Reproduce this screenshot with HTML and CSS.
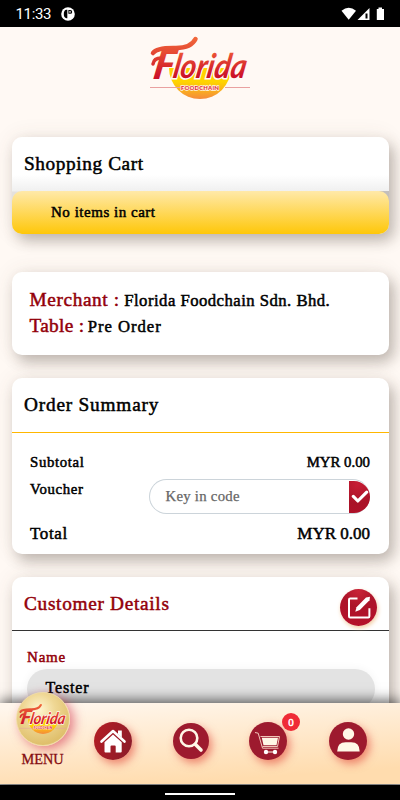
FILE: index.html
```
<!DOCTYPE html>
<html lang="en">
<head>
<meta charset="utf-8">
<title>Shopping Cart</title>
<link rel="stylesheet" href="styles.css">
</head>
<body>
<div class="screen">
  <header class="status">
    <span class="clock">11:33</span>
    <svg class="app" width="14" height="14" viewBox="0 0 14 14"><circle cx="7" cy="7" r="6.8" fill="#fff"/><path d="M5.500 2.800Q2.800 3 2.800 7t2.700 4.200H6.300V2.800z" fill="#000"/><path d="M7.400 3h1.900a1.900 1.900 0 0 1 0 3.800H7.400z" fill="#000"/><circle cx="9" cy="4.900" r=".8" fill="#fff"/></svg>
    <svg class="signals" width="46" height="14" viewBox="0 0 46 14"><path d="M0.500 3.800Q7.700-2.300 15 3.800L7.700 12.700z" fill="#fff"/><path d="M16.500 13L28.500 1v12z" fill="#fff"/><path d="M24.500 6.500h2v5h-2z" fill="#000"/><path d="M35.800 2h1.700V.6h3.500V2h2v11h-7.200z" fill="#fff"/></svg>
  </header>

  <main class="content">
    <svg class="brand" width="104" height="66" viewBox="0 0 104 66">
      <defs>
        <linearGradient id="red" x1="0" y1="0" x2="0" y2="1"><stop offset=".15" stop-color="#ee5a36"/><stop offset=".8" stop-color="#cb1028"/></linearGradient>
        <linearGradient id="swash" gradientUnits="userSpaceOnUse" x1="0" y1="2" x2="0" y2="44"><stop offset="0" stop-color="#f2693a"/><stop offset="1" stop-color="#cb1028"/></linearGradient>
        <linearGradient id="sun" x1="0" y1="0" x2="0" y2="1"><stop offset=".45" stop-color="#ffd400"/><stop offset="1" stop-color="#f58a3c"/></linearGradient>
        <g id="logo">
          <path d="M21 33H83A31 31 0 0 1 21 33" fill="url(#sun)"/>
          <path d="M2 52.500h31M77 52.500h25" stroke="#e9a1a0" stroke-width="1"/>
          <text class="logo-initial" x="4" y="44" transform="translate(7.800 0) skewX(-10)" textLength="21" lengthAdjust="spacingAndGlyphs">F</text>
          <text class="logo-name" x="24" y="43" transform="translate(7.500 0) skewX(-10)" textLength="73" lengthAdjust="spacingAndGlyphs">lorida</text>
          <path d="M5 18Q9 12.500 28 13Q43 13 47.500 4" fill="none" stroke="url(#swash)" stroke-width="4.500" stroke-linecap="round"/>
          <path d="M5 29Q6 23 13 23" fill="none" stroke="url(#swash)" stroke-width="3.500" stroke-linecap="round"/>
          <text class="logo-sub" x="33" y="54.600" textLength="38">FOODCHAIN</text>
        </g>
      </defs>
      <use href="#logo"/>
    </svg>

    <section class="card cart">
      <h2 class="title">Shopping Cart</h2>
      <div class="empty"><span>No items in cart</span></div>
    </section>

    <section class="card merchant">
      <p><b class="m1">Merchant :</b><span class="m2">Florida Foodchain Sdn. Bhd.</span></p>
      <p><b class="m3">Table :</b><span class="m4">Pre Order</span></p>
    </section>

    <section class="card summary">
      <h2 class="title">Order Summary</h2>
      <div class="row subtotal"><span class="wide">Subtotal</span><span>MYR 0.00</span></div>
      <div class="row voucher"><span class="wide">Voucher</span>
        <div class="code"><span>Key in code</span>
          <div class="apply"><svg width="18" height="14" viewBox="0 0 16 13"><path d="M1.800 6L6 10.200L14.200 2" fill="none" stroke="#fff" stroke-width="2.900" stroke-linecap="round" stroke-linejoin="round"/></svg></div>
        </div>
      </div>
      <div class="row total"><span class="wide">Total</span><span>MYR 0.00</span></div>
    </section>

    <section class="card customer">
      <div class="customer-head"><h2>Customer Details</h2>
        <div class="edit"><svg width="37" height="37" viewBox="0 0 37 37"><path d="M17.500 9.500h-7.300q-1.200 0-1.200 1.200v16.600q0 1.200 1.200 1.200h18q1.200 0 1.200-1.200v-8" fill="none" stroke="#fff" stroke-width="2"/><path d="M15.300 22.800l1.200-4.500L26 8.500l4-.7-.5 3.500-9.700 9.800z" fill="#fff"/></svg></div>
      </div>
      <div class="label">Name</div>
      <div class="field"><span>Tester</span></div>
    </section>
  </main>

  <nav class="nav">
    <div class="item menu">
      <div class="orb"><svg width="50" height="32" viewBox="0 0 104 66"><use href="#logo"/></svg></div>
      <span>MENU</span>
    </div>
    <div class="item"><div class="disc home"><svg width="38" height="38" viewBox="0 0 38 38"><path d="M7.500 19.500L19 9l11.500 10.500" fill="none" stroke="#fff" stroke-width="2.600" stroke-linecap="round" stroke-linejoin="round"/><path d="M24 8.500h3.800v7L24 12z" fill="#fff"/><path d="M10.500 20.300L19 12.600l8.700 7.700v9.200q0 1-1 1h-5v-6q0-1-1-1h-3.200q-1 0-1 1v6h-5q-1 0-1-1z" fill="#fff"/></svg></div></div>
    <div class="item"><div class="disc search"><svg width="36" height="36" viewBox="0 0 36 36"><circle cx="16" cy="15" r="8.300" fill="none" stroke="#fff8e7" stroke-width="2.600"/><path d="M22.500 21.500L28 27" stroke="#fff8e7" stroke-width="3.600" stroke-linecap="round"/></svg></div></div>
    <div class="item"><div class="disc cart-disc"><svg width="38" height="38" viewBox="0 0 38 38"><path d="M6 10.500l3.200.7 4.300 15h16M11.500 14.500H30.500L28.500 24.500H13.500" fill="none" stroke="#fbd9c8" stroke-width=".9" stroke-linejoin="round"/><path d="M12.800 15.800h16.200l-1.500 7.400H14.500z" fill="#fff8e7"/><path d="M17 30h9" stroke="#fff8e7"/><circle cx="17" cy="30" r="2.200" fill="#fff"/><circle cx="26" cy="30" r="2.200" fill="#fff"/></svg></div><span class="badge">0</span></div>
    <div class="item"><div class="disc"><svg width="38" height="38" viewBox="0 0 38 38"><circle cx="19.500" cy="12" r="5.700" fill="#fff8e7"/><path d="M8.200 29.500q0-9.300 8.500-9.300h5.500q8.500 0 8.500 9.300z" fill="#fff8e7"/></svg></div></div>
  </nav>
  <footer class="gesture"><i></i></footer>
</div>
</body>
</html>
```
FILE: styles.css
```
* { box-sizing: border-box; margin: 0; padding: 0; }
body {
  width: 400px; height: 800px; overflow: hidden;
  font-family: "Liberation Serif", serif; color: #000;
  -webkit-text-stroke: .5px currentColor;
}
h2, b { font-weight: 400; }
svg { display: block; }
.screen { height: 800px; display: flex; flex-direction: column; background: #fff9f4; }
.status { height: 27px; flex: none; background: #000; color: #fff; display: flex; align-items: center; padding: 1px 14px 0 15.500px; font: 15px Roboto, sans-serif; -webkit-text-stroke: 0; }
.clock { width: 34px; letter-spacing: -.35px; }
.app { margin-left: 11px; }
.signals { margin-left: auto; margin-right: -1px; }

.content { height: 676px; flex: none; overflow: hidden; padding: 8px 11px 0 12px; display: flex; flex-direction: column; }
.brand { margin: 0 auto 36px 136px; flex: none; }
.logo-initial, .logo-name { font-family: Lato, sans-serif; font-weight: 900; font-style: italic; fill: url(#red); stroke: none; -webkit-text-stroke: 0; }
.logo-initial { font-size: 41px; }
.logo-name { font-size: 34px; font-weight: 700; paint-order: stroke; stroke: #fff9f4; stroke-width: 3px; }
.logo-sub { font: 900 6px Lato, sans-serif; fill: #e0243a; stroke: #fff3e0; stroke-width: 1.500px; paint-order: stroke; -webkit-text-stroke: 0; }

.card { background: #fff; border-radius: 10px; flex: none; box-shadow: 5px 7px 14px rgba(70, 60, 50, .32), 0 0 22px rgba(90, 70, 50, .09); }
.title { height: 54px; line-height: 54px; padding-left: 12px; font-size: 19.300px; letter-spacing: .8px; }
.cart { height: 97px; margin-bottom: 38px; background: linear-gradient(to right, rgba(190, 186, 184, 0) 60%, rgba(190, 186, 184, .9)) 0 54px / 100% 20px no-repeat, linear-gradient(#fff 38px, #f0f0f0 54px, #e4e1de 55px); }
.cart .title { letter-spacing: .6px; }
.empty { height: 43px; border-radius: 10px; background: linear-gradient(#ffe9a9, #fec709); line-height: 43px; padding-left: 39px; font-size: 15px; letter-spacing: .52px; }
.merchant { height: 83px; margin-bottom: 23px; padding: 15px 17.500px; line-height: 26px; font-size: 16.700px; }
.merchant p { height: 26px; }
.merchant b { color: #93000a; font-size: 19.300px; }
.m1 { letter-spacing: .62px; margin-right: 4.500px; }
.m2 { letter-spacing: .47px; }
.m3 { letter-spacing: .3px; margin-right: 3.500px; }
.m4 { letter-spacing: .95px; }
.summary { height: 176px; margin-bottom: 23px; }
.summary .title { height: 55px; border-bottom: 1px solid #ffb700; }
.row { display: flex; justify-content: space-between; padding: 0 19px 0 18px; }
.wide { letter-spacing: .65px; }
.subtotal { height: 46px; padding-top: 18px; line-height: 22px; font-size: 14.800px; }
.voucher { height: 42px; font-size: 14.800px; line-height: 21px; }
.total { line-height: 25px; font-size: 17px; }
.code { width: 221px; height: 35px; border: 1px solid #ccd4da; border-right: 0; border-radius: 18px; display: flex; justify-content: space-between; align-items: center; padding-left: 15.500px; color: #666; font-size: 14.800px; line-height: 32px; -webkit-text-stroke-width: .25px; }
.code > span { letter-spacing: .25px; padding-bottom: 2px; }
.apply { width: 21px; height: 32px; border-radius: 0 16px 16px 0; background: radial-gradient(circle at 40% 10%, #c71d35, #a91227 60%, #b01028); display: flex; align-items: center; justify-content: center; }

.customer { height: 160px; }
.customer-head { height: 54px; border-bottom: 1px solid #333; display: flex; justify-content: space-between; padding: 0 12px 0 12px; color: #93000a; }
.customer-head h2 { font-size: 19.300px; line-height: 54px; letter-spacing: .7px; }
.edit { width: 37px; height: 37px; margin-top: 12px; border-radius: 50%; background: radial-gradient(circle at 50% 5%, #c92337, #ac1429 40%, #b8102a); box-shadow: 1px 2px 4px #f2cba0; }
.label { color: #93000a; font-size: 15px; line-height: 22px; padding: 15px 0 1px 15px; letter-spacing: .8px; }
.field { margin-left: 14.500px; width: 348px; height: 40px; border-radius: 20px; background: #e3e3e3; line-height: 37px; padding-left: 19px; font-size: 16px; letter-spacing: .85px; box-shadow: 0 0 10px rgba(0, 0, 0, .05); }

.nav { height: 81px; flex: none; display: grid; grid-template-columns: 74px 78px 77px 78px 82px; background: linear-gradient(176deg, #fff6ec 5%, #ffdcae 85%); box-shadow: 0 -3px 12px rgba(0, 0, 0, .6); position: relative; }
.item { display: flex; justify-content: center; align-items: center; position: relative; height: 75px; }
.menu { flex-direction: column; justify-content: flex-start; width: 85px; color: #860e12; font-size: 14.300px; -webkit-text-stroke-width: .3px; }
.menu span { line-height: 18px; margin-top: 4px; }
.orb { width: 54px; height: 54px; flex: none; margin-top: -11px; border-radius: 50%; border: 1px solid #f1dba5; background: radial-gradient(circle at 42% 32%, #fff6d2 0, #efd794 35%, #dfbf6b 75%, #f0dda0); box-shadow: 4px 3px 11px rgba(205, 35, 65, .55); display: flex; align-items: center; justify-content: center; }
.disc { width: 38px; height: 38px; border-radius: 50%; background: #9d1a2e; box-shadow: 3px 4px 9px rgba(222, 57, 45, .55); }
.home { background: linear-gradient(110deg, #b51d24, #8a1b2a); }
.search { width: 36px; height: 36px; }
.badge { position: absolute; left: 53px; top: 10px; width: 18px; height: 18px; border-radius: 50%; background: #ef2b36; color: #fff; font-size: 11px; line-height: 18px; text-align: center; }
.gesture { height: 16px; flex: none; background: #000; border-top: 1px solid #999; display: flex; justify-content: center; }
.gesture i { width: 70px; height: 2px; margin-top: 8px; background: #fff; }
```
